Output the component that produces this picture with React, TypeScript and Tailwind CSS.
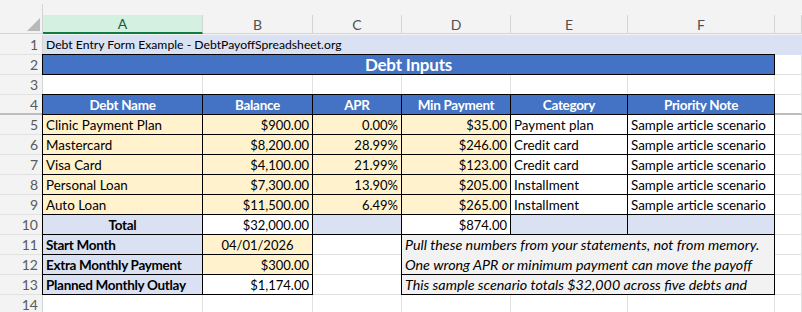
import type { ReactNode } from "react";

type Fill = "light" | "blue" | "cream" | "white" | "gray";

interface Cell {
  t?: ReactNode;
  fill?: Fill;
  box?: boolean;
  al?: "l" | "c" | "r";
  b?: boolean;
  i?: boolean;
  num?: boolean;
  big?: boolean;
  small?: boolean;
  span?: 3 | 6 | 7;
  rows2?: boolean;
  cls?: string;
}

const fillBg: Record<Fill, string> = {
  light: "bg-[#d9e1f2] border-[#d9e1f2]",
  blue: "bg-[#4472c4] border-[#4472c4]",
  cream: "bg-[#fff2cc] border-[#fff2cc]",
  white: "bg-white border-white",
  gray: "bg-[#f2f2f2] border-[#f2f2f2]",
};

const spanCls = { 3: "col-span-3", 6: "col-span-6", 7: "col-span-7" };

const boxCls =
  "relative !border-black shadow-[-1px_0_0_0_#000,0_-1px_0_0_#000,-1px_-1px_0_0_#000]";

const hdr = (t: string): Cell => ({ t, fill: "blue", box: true, al: "c", b: true, cls: "text-white" });
const name = (t: string): Cell => ({ t, fill: "cream", box: true });
const num = (t: string): Cell => ({ t, fill: "cream", box: true, al: "r", num: true });
const plain = (t: string): Cell => ({ t, fill: "white", box: true });
const label = (t: string): Cell => ({ t, fill: "light", box: true, b: true });

const debts = [
  ["Clinic Payment Plan", "$900.00", "0.00%", "$35.00", "Payment plan"],
  ["Mastercard", "$8,200.00", "28.99%", "$246.00", "Credit card"],
  ["Visa Card", "$4,100.00", "21.99%", "$123.00", "Credit card"],
  ["Personal Loan", "$7,300.00", "13.90%", "$205.00", "Installment"],
  ["Auto Loan", "$11,500.00", "6.49%", "$265.00", "Installment"],
];

const empty: Cell = {};

const rows: Cell[][] = [
  [{ t: "Debt Entry Form Example - DebtPayoffSpreadsheet.org", fill: "light", span: 7, small: true }],
  [{ t: "Debt Inputs", fill: "blue", box: true, al: "c", big: true, span: 6, cls: "text-white" }, empty],
  [empty, empty, empty, empty, empty, empty, empty],
  [hdr("Debt Name"), hdr("Balance"), hdr("APR"), hdr("Min Payment"), hdr("Category"), hdr("Priority Note"), { cls: "!border-b-2 !border-b-[#bdbdbd]" }],
  ...debts.map(([n, bal, apr, min, cat]) => [
    name(n),
    num(bal),
    num(apr),
    num(min),
    plain(cat),
    plain("Sample article scenario"),
    empty,
  ]),
  [
    { t: "Total", fill: "light", box: true, b: true, al: "c" },
    { t: "$32,000.00", fill: "white", box: true, al: "r", num: true },
    { fill: "light", box: true },
    { t: "$874.00", fill: "white", box: true, al: "r", num: true },
    { fill: "light", box: true },
    { fill: "light", box: true },
    empty,
  ],
  [
    label("Start Month"),
    { t: "04/01/2026", fill: "cream", box: true, al: "c", num: true },
    empty,
    {
      t: (
        <div className="flex flex-col">
          <span className="h-[20px] whitespace-nowrap">Pull these numbers from your statements, not from memory.</span>
          <span className="h-[20px] whitespace-nowrap">One wrong APR or minimum payment can move the payoff</span>
        </div>
      ),
      fill: "gray",
      box: true,
      i: true,
      span: 3,
      rows2: true,
      cls: "!items-start",
    },
    empty,
  ],
  [label("Extra Monthly Payment"), { t: "$300.00", fill: "cream", box: true, al: "r", num: true }, empty, empty],
  [
    label("Planned Monthly Outlay"),
    { t: "$1,174.00", fill: "white", box: true, al: "r", num: true },
    empty,
    { t: "This sample scenario totals $32,000 across five debts and", fill: "gray", box: true, i: true, span: 3 },
    empty,
  ],
  [empty, empty, empty, empty, empty, empty, empty],
];

function fontCls(c: Cell) {
  if (c.big) return "text-[17px] font-bold tracking-[-0.2px]";
  if (c.small) return "text-[12.2px]";
  if (c.i) return "italic text-[14.3px]";
  if (c.num) return "text-[13px]";
  if (c.b) return "font-bold text-[13.5px] tracking-[-0.3px]";
  return "text-[13.4px]";
}

function GridCell({ c }: { c: Cell }) {
  const align = c.al === "c" ? "justify-center" : c.al === "r" ? "justify-end" : "justify-start";
  return (
    <div
      className={[
        "flex items-center overflow-hidden whitespace-nowrap border-r border-b px-[3px] leading-[20px]",
        c.fill ? fillBg[c.fill] : "bg-white border-[#e1e1e1]",
        c.box ? boxCls : "",
        c.span ? spanCls[c.span] : "",
        c.rows2 ? "row-span-2" : "",
        align,
        fontCls(c),
        c.cls ?? "",
      ].join(" ")}
    >
      {c.t}
    </div>
  );
}

const letters = ["A", "B", "C", "D", "E", "F", ""];

export default function App() {
  return (
    <div className="h-[312px] w-[802px] overflow-hidden bg-[#f3f3f3] font-['Lato','Liberation_Sans',sans-serif] text-black">
      <div className="flex h-[15px]">
        <div className="mt-[4px] w-[43px] border-r border-[#d4d4d4]" />
      </div>
      <div className="grid grid-cols-[43px_160px_110px_89px_109px_117px_147px_1fr] auto-rows-[20px]">
        <div className="flex h-[19px] items-end justify-end border-r border-b border-[#d4d4d4] pb-[2px] pr-[2px]">
          <svg width="13" height="13" viewBox="0 0 13 13">
            <polygon points="13,0 13,13 0,13" fill="#b9b9b9" />
          </svg>
        </div>
        {letters.map((l, idx) =>
          idx === 0 ? (
            <div
              key={idx}
              className="flex h-[19px] items-center justify-center border-b-2 border-r border-b-[#107c41] border-r-[#d4d4d4] bg-[#d3f0e0] text-[14px] text-[#185c37]"
            >
              {l}
            </div>
          ) : (
            <div
              key={idx}
              className="flex h-[19px] items-center justify-center border-r border-b border-[#d4d4d4] text-[14px] text-[#505050]"
            >
              {l}
            </div>
          ),
        )}
        {rows.map((r, ri) => (
          <RowCells key={ri} n={ri + 1} cells={r} />
        ))}
      </div>
    </div>
  );
}

function RowCells({ n, cells }: { n: number; cells: Cell[] }) {
  return (
    <>
      <div
        className={`flex items-center justify-end border-r border-b border-r-[#d4d4d4] pr-[4px] text-[14px] text-[#5a5a5a] ${
          n === 4 ? "border-b-2 border-b-[#bdbdbd]" : "border-b-[#e1e1e1]"
        }`}
      >
        {n}
      </div>
      {cells.map((c, ci) => (
        <GridCell key={ci} c={c} />
      ))}
    </>
  );
}
